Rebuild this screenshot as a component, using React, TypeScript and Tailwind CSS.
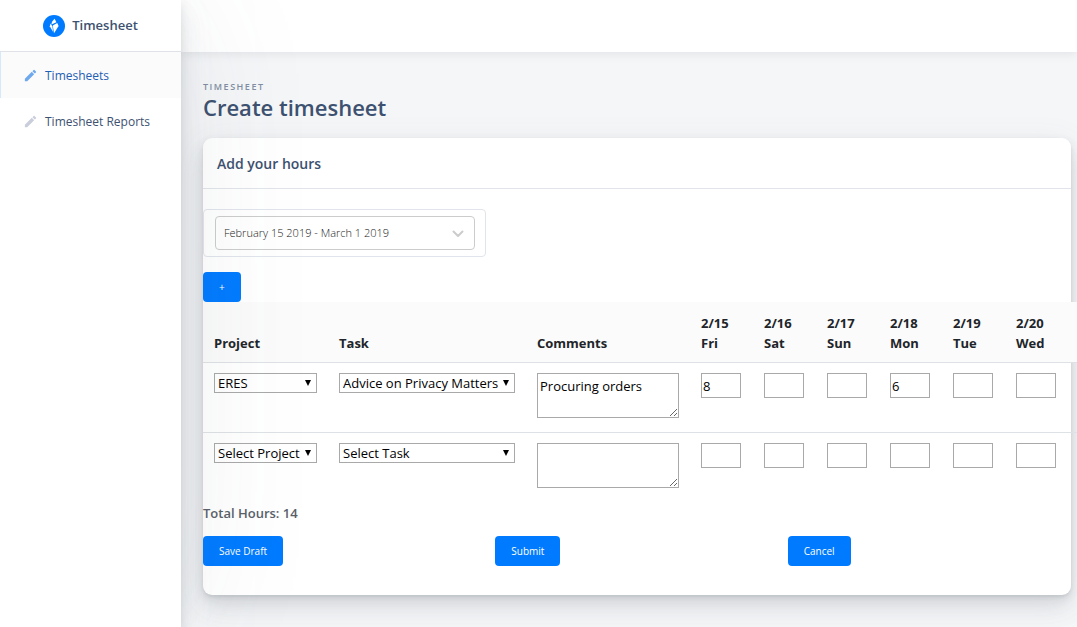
import React from "react";
import { MdEdit } from "react-icons/md";

const days = [
  { date: "2/15", name: "Fri" },
  { date: "2/16", name: "Sat" },
  { date: "2/17", name: "Sun" },
  { date: "2/18", name: "Mon" },
  { date: "2/19", name: "Tue" },
  { date: "2/20", name: "Wed" },
];

const rows = [
  {
    project: "ERES",
    task: "Advice on Privacy Matters",
    comments: "Procuring orders",
    hours: ["8", "", "", "6", "", ""],
  },
  {
    project: "Select Project",
    task: "Select Task",
    comments: "",
    hours: ["", "", "", "", "", ""],
  },
];

function Logo() {
  return (
    <svg viewBox="0 0 22 22" className="size-[22px]" aria-hidden="true">
      <circle cx="11" cy="11" r="11" fill="#007bff" />
      <path d="M11.6 3.8 13.4 7.2 8.4 9.4 9 6.8z" fill="#fff" />
      <path d="M7.6 8.6 6.8 11.2l3.2 5.6-.6-5.4z" fill="#fff" />
      <path d="M14.2 8 9.8 10.4l1.2 7.8L15.6 11z" fill="#fff" />
    </svg>
  );
}

function CellSelect({ label, value, width }: { label: string; value: string; width: string }) {
  return (
    <div className={`relative ${width}`}>
      <select
        aria-label={label}
        defaultValue={value}
        className="block h-5 w-full appearance-none border border-[#a9a9a9] bg-white pt-px pl-[3px] text-[13px] leading-[17px] text-black"
      >
        <option>{value}</option>
      </select>
      <svg
        viewBox="0 0 6 6"
        className="pointer-events-none absolute top-[7px] right-[6px] size-[6px]"
        aria-hidden="true"
      >
        <path d="M0 0h6L3 6z" fill="#000" />
      </svg>
    </div>
  );
}

function ActionButton({ children, label }: { children: React.ReactNode; label?: string }) {
  return (
    <button
      type="button"
      aria-label={label}
      className="h-[30px] rounded bg-[#007bff] px-4 text-[10px] leading-none text-white"
    >
      {children}
    </button>
  );
}

export default function App() {
  return (
    <div className="flex min-h-screen overflow-hidden bg-[#f5f6f8] font-['Open_Sans',sans-serif] text-[13px] text-[#3d5170]">
      <aside className="z-10 w-[181px] shrink-0 bg-white shadow-[0_2px_141px_rgba(90,97,105,0.1),0_4px_8px_rgba(90,97,105,0.12),0_14px_21px_rgba(90,97,105,0.1),0_7px_33px_rgba(165,182,201,0.1)]">
        <a
          href="#home"
          className="flex h-[52px] items-center justify-center gap-[7px] border-b border-[#dfe3e8] text-[13px] font-semibold"
        >
          <Logo />
          Timesheet
        </a>
        <nav>
          <a
            href="#timesheets"
            className="flex h-[46px] items-center gap-[7px] border-l border-[#d6e8fb] bg-[#fbfbfb] pt-px pl-[22px] text-xs text-[#1f60b5]"
          >
            <MdEdit className="size-[15px] text-[#6ea8ef]" />
            Timesheets
          </a>
          <a href="#reports" className="flex h-[46px] items-center gap-[7px] pt-px pl-[23px] text-xs">
            <MdEdit className="size-[15px] text-[#cacedb]" />
            Timesheet Reports
          </a>
        </nav>
      </aside>

      <main className="min-w-0 flex-1">
        <header className="h-[52px] bg-white shadow-[0_2px_9px_rgba(90,97,105,0.12)]" />
        <div className="pt-7 pr-[6px] pl-[22px]">
          <p className="text-[9px] leading-[13px] font-semibold tracking-[1.5px] text-[#818ea3] uppercase">
            Timesheet
          </p>
          <h1 className="text-[22px] leading-7 font-semibold">Create timesheet</h1>

          <section className="mt-[17px] rounded-[9px] bg-white pb-[29px] shadow-[0_7px_33px_rgba(90,97,105,0.1),0_14px_21px_rgba(90,97,105,0.1),0_4px_8px_rgba(90,97,105,0.12),0_2px_3px_rgba(90,97,105,0.1)]">
            <h2 className="flex h-[51px] items-center border-b border-[#e1e5eb] px-[14px] pt-[2px] text-sm font-semibold">
              Add your hours
            </h2>

            <div className="mt-5 w-[283px] rounded border border-[#e1e5eb] py-[6px] pr-[10px] pl-[11px]">
              <div className="relative">
                <select
                  aria-label="Pay period"
                  defaultValue="February 15 2019 - March 1 2019"
                  className="block h-[34px] w-full appearance-none rounded border border-[#cccccc] bg-transparent px-2 text-[11px] font-light text-[#222]"
                >
                  <option>February 15 2019 - March 1 2019</option>
                </select>
                <svg
                  viewBox="0 0 12 8"
                  className="pointer-events-none absolute top-[14px] right-[11px] h-2 w-3"
                  aria-hidden="true"
                >
                  <path
                    d="M1.5 1.5 6 6l4.5-4.5"
                    fill="none"
                    stroke="#ccc"
                    strokeWidth="2"
                    strokeLinecap="round"
                    strokeLinejoin="round"
                  />
                </svg>
              </div>
            </div>

            <div className="mt-[15px] flex">
              <ActionButton label="Add row">+</ActionButton>
            </div>

            <div className="-mr-2">
              <table className="w-full border-separate border-spacing-0">
                <thead className="bg-[#fbfbfb] text-left text-[13px] leading-5 font-bold text-[#212529]">
                  <tr>
                    {["Project", "Task", "Comments"].map((title) => (
                      <th key={title} className="px-[11px] pt-[11px] pb-[9px] align-bottom">
                        {title}
                      </th>
                    ))}
                    {days.map((day) => (
                      <th key={day.date} className="px-[11px] pt-[11px] pb-[9px] last:w-full">
                        {day.date}
                        <br />
                        {day.name}
                      </th>
                    ))}
                  </tr>
                </thead>
                <tbody>
                  {rows.map((row) => (
                    <tr key={row.project} className="h-[70px]">
                      <td className="border-t border-[#dee2e6] px-[11px] py-[10px] align-top">
                        <CellSelect label="Project" value={row.project} width="w-[103px]" />
                      </td>
                      <td className="border-t border-[#dee2e6] px-[11px] py-[10px] align-top">
                        <CellSelect label="Task" value={row.task} width="w-44" />
                      </td>
                      <td className="border-t border-[#dee2e6] px-[11px] py-[10px] align-top">
                        <textarea
                          aria-label="Comments"
                          defaultValue={row.comments}
                          className="block h-[45px] w-[142px] border border-[#a9a9a9] bg-white px-[2px] py-[2px] text-[13px] leading-5 text-black"
                        />
                      </td>
                      {days.map((day, i) => (
                        <td
                          key={day.date}
                          className="border-t border-[#dee2e6] py-[10px] pr-3 pl-[11px] align-top"
                        >
                          <input
                            aria-label={`Hours ${day.date}`}
                            defaultValue={row.hours[i]}
                            className="block h-[25px] w-10 border border-[#a9a9a9] bg-white px-px text-[13px] text-black"
                          />
                        </td>
                      ))}
                    </tr>
                  ))}
                </tbody>
              </table>
            </div>

            <p className="mb-3 pt-px text-[13px] leading-[21px] font-semibold text-[#5a6169]">
              Total Hours: 14
            </p>
            <div className="grid grid-cols-3 gap-[9px]">
              <div>
                <ActionButton>Save Draft</ActionButton>
              </div>
              <div>
                <ActionButton>Submit</ActionButton>
              </div>
              <div>
                <ActionButton>Cancel</ActionButton>
              </div>
            </div>
          </section>
        </div>
      </main>
    </div>
  );
}
